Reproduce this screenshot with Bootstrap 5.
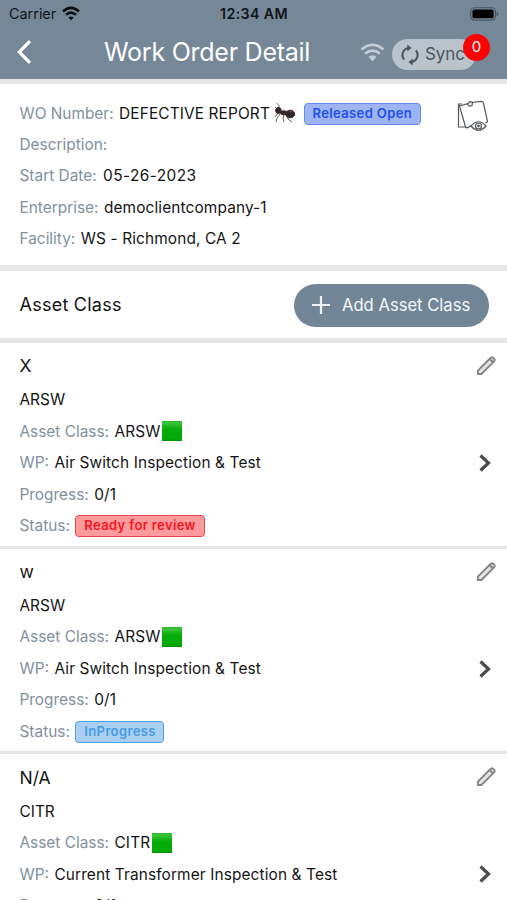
<!DOCTYPE html>
<html lang="en">
<head>
<meta charset="utf-8">
<meta name="viewport" content="width=device-width, initial-scale=1">
<title>Work Order Detail</title>
<link href="https://cdn.jsdelivr.net/npm/bootstrap@5.3.0/dist/css/bootstrap.min.css" rel="stylesheet">
<style>
html,body{height:900px;overflow:hidden}
body{font-family:Inter,"Liberation Sans",sans-serif;font-size:15.4px;color:#141414;background:#fff}
main{height:816px;overflow:hidden}
svg{display:block;flex:none}
.app-header{height:84px;background:#768798;border-bottom:5px solid #e5e5e5}
.status-bar{height:28px;padding:0 8px 0 9px;color:#101418;font-size:14.4px}
.status-bar>div{flex:1 1 0}
.clock{font-size:14.2px;font-weight:600;letter-spacing:.38px;white-space:nowrap}
.title-bar{height:49px;padding-left:17px}
.back-icon{margin-top:-1px}
.page-title{font-size:25px;color:#fff;letter-spacing:-.25px;margin:-2px 0 0 72px;line-height:46px;font-weight:400;white-space:nowrap;width:256px}
.wifi-icon{margin-top:-1px}
.sync-btn{width:84px;height:31px;background:#b9c3cc;color:#4c5358;font-size:17px;padding:0 0 0 8px;margin-left:7px;margin-top:4px}
.sync-count{width:27px;height:27px;background:#f00;color:#fff;font-size:15px;left:71px;top:-5px}
.sync-text{letter-spacing:-.1px;padding-left:1px}
.work-order{height:187px;padding:13.5px 19px 0 19.5px;border-bottom:6px solid #e5e5e5}
.sketch-icon{margin-top:2px}
.line{height:31.35px;white-space:nowrap}
.key{color:#82909d;margin-right:5.500px}
.val{letter-spacing:.13px}
.date{letter-spacing:.42px;margin-left:1px}
.tag{font-size:13px;font-weight:600;height:22px;letter-spacing:.37px;border:1.5px solid;border-radius:4px;padding:0 7.7px 0 8px;line-height:19.5px;white-space:nowrap;margin-top:1px}
.tag-open{color:#2150e8;background:#9db3f2;border-color:#5f8cf0;letter-spacing:.38px;margin-left:4px;padding:0 7.500px}
.tag-review{color:#fb1420;background:#ff9a9d;border-color:#e9444c}
.tag-progress{color:#429ae6;background:#abcff0;border-color:#4b9fe4}
.section-bar{height:72px;padding:1px 18px 0 19.5px;border-bottom:5px solid #e5e5e5}
.section-bar h2{font-size:18px;margin:0;font-weight:400;letter-spacing:.25px}
.add-btn{width:195px;height:43px;background:#728596;color:#f4f8fb;font-size:16.6px;padding-left:18px;white-space:nowrap}
.asset{height:205.7px;padding:6px 11px 0 19.5px;border-bottom:3px solid #e5e5e5}
.asset-name{height:35.2px;font-size:17.5px}
.asset .line{height:31.45px}
.swatch{width:20px;height:20px;background:linear-gradient(#22b722 0,#3cc43c 10%,#16b516 30%,#05ab08 45%,#05ab08 90%,#008e04);margin-left:1.5px}
.pencil{margin-top:3px}
.chev{margin:78px 5px 0 0}
</style>
</head>
<body>
<svg class="d-none">
  <symbol id="pencil" viewBox="0 0 21 21"><path d="M2 18.9v-3.6L14.6 2.7 16 1.6q1-.6 2 .2l1.2 1.2q.9 1 .1 2.1L18.2 6.500 5.700 18.900z" fill="#e4e4e4" stroke="#858585" stroke-width="2"/><path d="m14.400 3.200 3.600 3.600" stroke="#858585" stroke-width="2.200"/></symbol>
  <symbol id="chevron" viewBox="0 0 12 18"><path d="m1.500 1.500 8 7.500-8 7.500" fill="none" stroke="#4c4c4c" stroke-width="3.200"/></symbol>
</svg>
<header class="app-header">
  <div class="status-bar d-flex align-items-center">
    <div class="d-flex align-items-center"><span class="carrier">Carrier</span>
      <svg class="ms-1" width="22" height="16" viewBox="0 0 22 16" fill="none" stroke="#080b0e" stroke-width="2.6"><path d="M3 5.4Q11-1.6 19 5.4M6 8.8Q11 4.5 16 8.8"/><path d="M8.4 11.5Q11 9.4 13.6 11.5L11 14.2z" fill="#080b0e" stroke="none"/></svg></div>
    <span class="clock">12:34 AM</span>
    <div class="d-flex justify-content-end">
      <svg width="29" height="14" viewBox="0 0 31 15"><rect x=".7" y=".8" width="26.5" height="13.2" rx="4" fill="none" stroke="#465563" stroke-width="1.3"/><rect x="2.6" y="2.7" width="22.7" height="9.4" rx="2" fill="#000"/><path d="M28.4 5v5q2-1 2-2.5t-2-2.5z" fill="#465563"/></svg></div>
  </div>
  <div class="title-bar d-flex align-items-center">
    <svg class="back-icon" width="15" height="24" viewBox="0 0 15 24" fill="none" stroke="#fff" stroke-width="3.2"><path d="M13 1.2 2.2 12 13 22.8"/></svg>
    <h1 class="page-title">Work Order Detail</h1>
    <svg class="wifi-icon" width="25" height="19" viewBox="0 0 25 19" fill="none" stroke="#c1ccd5" stroke-width="2.7"><path d="M1.5 6.5Q12.5-2.7 23.5 6.5M5 10.7Q12.5 4.6 20 10.7"/><path d="M8.4 13.8q4.1-3.1 8.2 0l-4.1 4.6z" fill="#c1ccd5" stroke="none"/></svg>
    <div class="sync-btn rounded-pill position-relative d-flex align-items-center">
      <svg width="20" height="22" viewBox="0 0 20 22" fill="none" stroke="#4c5358" stroke-width="2"><path d="M4.1 15.5A7 7 0 0 1 8.8 4M15.9 6.5A7 7 0 0 1 11.2 18"/><path d="M7.3.5v7l4.2-3.6zM12.7 21.5v-7L8.5 18z" fill="#4c5358" stroke="none"/></svg>
      <span class="sync-text ms-1">Sync</span>
      <span class="sync-count position-absolute rounded-circle d-flex align-items-center justify-content-center">0</span>
    </div>
  </div>
</header>
<main>
  <section class="work-order d-flex justify-content-between">
    <div>
      <div class="line d-flex align-items-center"><span class="key">WO Number:</span><span class="val">DEFECTIVE REPORT</span>
        <svg class="mx-1" width="22" height="22" viewBox="0 0 22 22" fill="#302726" stroke="#302726"><path d="M5 7Q6 3 2.500 1M4 8 1 5M6 12l-3 4-1 4M10 13l-1 3 1 4M12 13l3 5 3 2M4 11l-3 4" fill="none" stroke="#69605e" stroke-width="1"/><ellipse cx="4.400" cy="8.500" rx="2.800" ry="3"/><ellipse cx="9.700" cy="10.800" rx="3.200" ry="2"/><ellipse cx="16.200" cy="12" rx="4.500" ry="3.800"/><path d="M15 10q2-1 4 0" stroke="#7d4d43" fill="none"/></svg>
        <span class="tag tag-open">Released Open</span></div>
      <div class="line d-flex align-items-center"><span class="key">Description:</span></div>
      <div class="line d-flex align-items-center"><span class="key">Start Date:</span><span class="val date">05-26-2023</span></div>
      <div class="line d-flex align-items-center"><span class="key">Enterprise:</span><span class="val">democlientcompany-1</span></div>
      <div class="line d-flex align-items-center"><span class="key">Facility:</span><span class="val">WS - Richmond, CA 2</span></div>
    </div>
    <svg class="sketch-icon" width="31" height="32" viewBox="0 0 31 32" fill="none" stroke="#50565a" stroke-width="1.2"><path d="M5 4H1.500v23h7.700M1.500 5.500h2"/><path d="M15 25.500 10.200 27.800Q9 28 8.500 26.700L2.800 7.200Q2.600 6 4 5.500L11 3.700M15 2.500l9.200-1.100q1.700 0 2.200 1.500l4 18q.2 1.200-1 1.600l-1.200.5"/><path d="m10.500 4 2.500-2.500 2.500 1-.5 3-2.500.8z"/><path d="M14 26q7.500-8.500 15 0-7.500 8.500-15 0z" fill="#fff"/><circle cx="21.500" cy="26" r="3"/><circle cx="21.500" cy="26" r=".8"/></svg>
  </section>
  <section class="section-bar d-flex align-items-center justify-content-between">
    <h2>Asset Class</h2>
    <div class="add-btn rounded-pill d-flex align-items-center">
      <svg width="18" height="18" viewBox="0 0 18 18" stroke="#eef3f7" stroke-width="2.2"><path d="M9 0v18M0 9h18"/></svg>
      <span class="add-text ms-2 ps-1">Add Asset Class</span></div>
  </section>
  <article class="asset d-flex justify-content-between">
    <div>
      <div class="asset-name d-flex align-items-center">X</div>
      <div class="line d-flex align-items-center">ARSW</div>
      <div class="line d-flex align-items-center"><span class="key">Asset Class:</span><span class="val">ARSW</span><i class="swatch"></i></div>
      <div class="line d-flex align-items-center"><span class="key">WP:</span><span class="val">Air Switch Inspection &amp; Test</span></div>
      <div class="line d-flex align-items-center"><span class="key">Progress:</span><span class="val">0/1</span></div>
      <div class="line d-flex align-items-center"><span class="key">Status:</span><span class="tag tag-review">Ready for review</span></div>
    </div>
    <div class="d-flex flex-column align-items-end pt-1">
      <svg class="pencil" width="20" height="20"><use href="#pencil"/></svg>
      <svg class="chev" width="12" height="18"><use href="#chevron"/></svg>
    </div>
  </article>
  <article class="asset d-flex justify-content-between">
    <div>
      <div class="asset-name d-flex align-items-center">w</div>
      <div class="line d-flex align-items-center">ARSW</div>
      <div class="line d-flex align-items-center"><span class="key">Asset Class:</span><span class="val">ARSW</span><i class="swatch"></i></div>
      <div class="line d-flex align-items-center"><span class="key">WP:</span><span class="val">Air Switch Inspection &amp; Test</span></div>
      <div class="line d-flex align-items-center"><span class="key">Progress:</span><span class="val">0/1</span></div>
      <div class="line d-flex align-items-center"><span class="key">Status:</span><span class="tag tag-progress">InProgress</span></div>
    </div>
    <div class="d-flex flex-column align-items-end pt-1">
      <svg class="pencil" width="20" height="20"><use href="#pencil"/></svg>
      <svg class="chev" width="12" height="18"><use href="#chevron"/></svg>
    </div>
  </article>
  <article class="asset d-flex justify-content-between">
    <div>
      <div class="asset-name d-flex align-items-center">N/A</div>
      <div class="line d-flex align-items-center">CITR</div>
      <div class="line d-flex align-items-center"><span class="key">Asset Class:</span><span class="val">CITR</span><i class="swatch"></i></div>
      <div class="line d-flex align-items-center"><span class="key">WP:</span><span class="val">Current Transformer Inspection &amp; Test</span></div>
      <div class="line d-flex align-items-center"><span class="key">Progress:</span><span class="val">0/1</span></div>
    </div>
    <div class="d-flex flex-column align-items-end pt-1">
      <svg class="pencil" width="20" height="20"><use href="#pencil"/></svg>
      <svg class="chev" width="12" height="18"><use href="#chevron"/></svg>
    </div>
  </article>
</main>
<script src="https://cdn.jsdelivr.net/npm/bootstrap@5.3.0/dist/js/bootstrap.bundle.min.js"></script>
</body>
</html>
